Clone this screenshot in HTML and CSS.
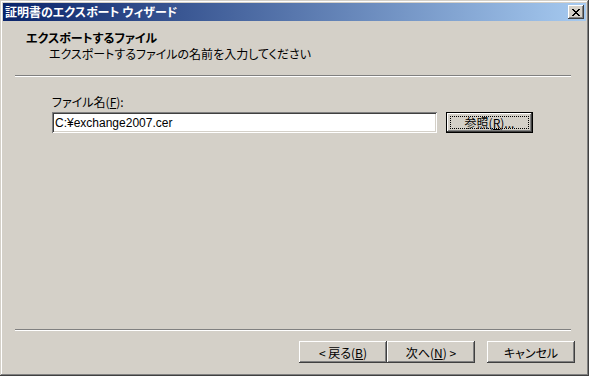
FILE: index.html
```html
<!DOCTYPE html>
<html lang="ja">
<head>
  <meta charset="UTF-8">
  <title>証明書のエクスポート ウィザード</title>
  <link rel="stylesheet" href="styles.css">
</head>
<body>

  <div class="window">
    <div class="titlebar">
      <span class="title">証明書のエクスポート ウィザード</span>
      <span class="close">
        <svg width="8" height="7" viewBox="0 0 8 7">
          <path d="M0 0h2v1h1v1h2v-1h1v-1h2v1h-1v1h-1v1h-1v1h1v1h1v1h1v1h-2v-1h-1v-1h-2v1h-1v1h-2v-1h1v-1h1v-1h1v-1h-1v-1h-1v-1h-1z" fill="#000"/>
        </svg>
      </span>
    </div>

    <div class="header">
      <div class="header-title">エクスポートするファイル</div>
      <div class="header-sub">エクスポートするファイルの名前を入力してください</div>
    </div>
    <div class="sep"></div>

    <div class="main">
      <label class="field-label">ファイル名(<u>F</u>):</label>
      <div class="field-row">
        <input class="file-input" type="text" value="C:¥exchange2007.cer">
        <button class="btn default"><span class="focus">参照(<u>R</u>)...</span></button>
      </div>
    </div>

    <div class="sep"></div>
    <div class="footer">
      <button class="btn">&lt; 戻る(<u>B</u>)</button>
      <button class="btn">次へ(<u>N</u>) &gt;</button>
      <button class="btn cancel">キャンセル</button>
    </div>
  </div>

</body>
</html>
```

FILE: styles.css
```css
body {
  margin: 0;
  background: #d4d0c8;
  font-family: "Noto Sans CJK JP", "Noto Sans", sans-serif;
  font-size: 12px;
  font-feature-settings: "palt";
  color: #000;
}

.window {
  width: 589px;
  height: 376px;
  box-sizing: border-box;
  padding: 3px;
  background: #d4d0c8;
  box-shadow: inset -1px -1px #404040, inset 1px 1px #d4d0c8,
              inset -2px -2px #808080, inset 2px 2px #ffffff;
  display: flex;
  flex-direction: column;
}

.titlebar {
  height: 18px;
  display: flex;
  align-items: center;
  justify-content: space-between;
  background: linear-gradient(to right, #0a246a, #a6caf0);
  padding: 0 2px 0 2px;
}

.title {
  color: #fff;
  font-weight: bold;
  font-size: 12px;
  line-height: 18px;
}

.close {
  width: 16px;
  height: 14px;
  box-sizing: border-box;
  background: #d4d0c8;
  display: flex;
  align-items: center;
  justify-content: center;
  box-shadow: inset -1px -1px #404040, inset 1px 1px #ffffff,
              inset -2px -2px #808080, inset 2px 2px #d4d0c8;
}

.header {
  height: 54px;
  box-sizing: border-box;
  padding: 10px 0 0 23px;
}

.header-title {
  font-weight: bold;
  font-size: 12px;
  line-height: 14px;
}

.header-sub {
  padding-left: 23px;
  margin-top: 2px;
  line-height: 13px;
}

.sep {
  margin: 0 15px 0 12px;
  height: 0;
  border-top: 1px solid #808080;
  border-bottom: 1px solid #ffffff;
}

.main {
  flex: 1;
  padding: 18px 0 0 49px;
}

.field-label {
  display: block;
  line-height: 14px;
  margin-bottom: 3px;
}

.field-row {
  display: flex;
  gap: 9px;
}

.file-input {
  width: 385px;
  height: 21px;
  box-sizing: border-box;
  border: none;
  margin: 0;
  padding: 1px 3px 0;
  font: inherit;
  font-family: "Liberation Sans", "Noto Sans CJK JP", sans-serif;
  background: #fff;
  box-shadow: inset 1px 1px #808080, inset -1px -1px #ffffff,
              inset 2px 2px #404040, inset -2px -2px #d4d0c8;
  outline: none;
}

.btn {
  width: 88px;
  height: 22px;
  box-sizing: border-box;
  border: none;
  margin: 0;
  padding: 0;
  font: inherit;
  color: #000;
  background: #d4d0c8;
  box-shadow: inset -1px -1px #404040, inset 1px 1px #ffffff,
              inset -2px -2px #808080, inset 2px 2px #d4d0c8;
}

.btn.default {
  width: 87px;
  height: 21px;
  border: 1px solid #000;
  padding: 3px;
  box-shadow: inset -1px -1px #404040, inset 1px 1px #ffffff,
              inset -2px -2px #808080, inset 2px 2px #d4d0c8;
}

.focus {
  display: block;
  height: 100%;
  box-sizing: border-box;
  border: 1px dotted #000;
  line-height: 11px;
}

.footer {
  display: flex;
  justify-content: flex-end;
  padding: 10px 11px 10px 0;
}

.btn.cancel {
  margin-left: 12px;
}
```
